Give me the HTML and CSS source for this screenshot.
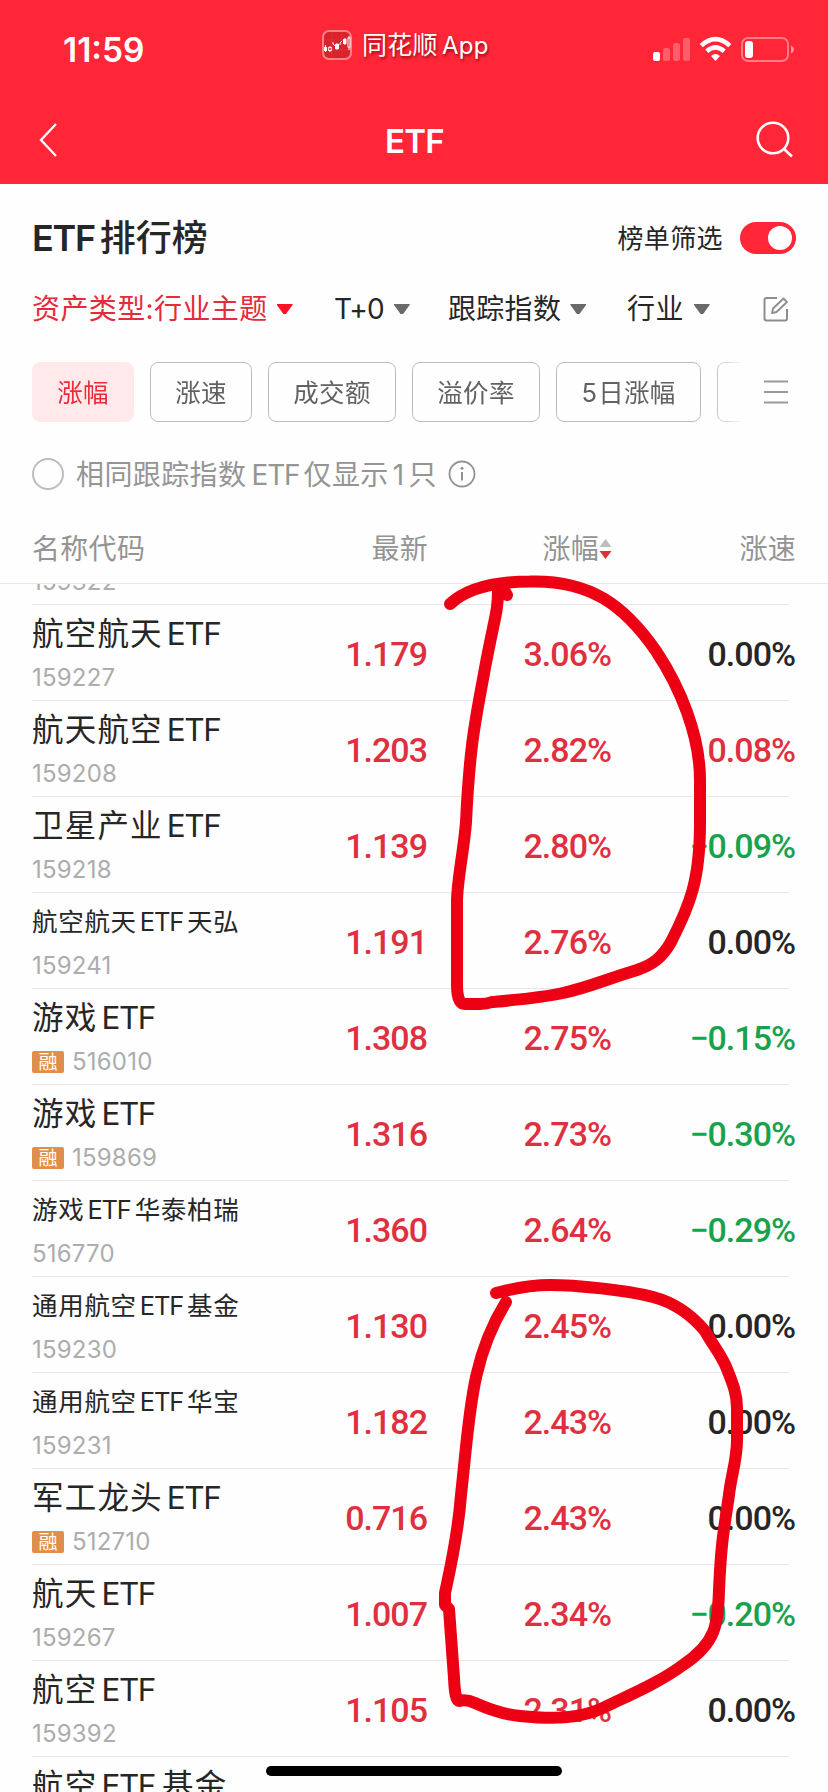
FILE: index.html
```html
<!DOCTYPE html>
<html lang="zh-CN">
<head>
<meta charset="utf-8">
<title>ETF</title>
<link rel="stylesheet" href="styles.css">
</head>
<body>
<div class="screen">
  <header class="top">
    <div class="status">
      <div class="time">11:59</div>
      <div class="app">
        <svg class="app-icon" width="30" height="30" viewBox="0 0 30 30"><rect x="1" y="1" width="28" height="28" rx="6" fill="#d9232b" stroke="#ff8087" stroke-width="2"/><path d="M2 10H28M2 20H28M10 2V28M20 2V28" stroke="#e23a40" stroke-width=".6"/><g fill="#fff"><rect x="2" y="17" width="3" height="4"/><rect x="13" y="14" width="4" height="5"/><rect x="21" y="9" width="3.500" height="5"/></g><path d="M3.500 15V22M8 16V22M11 12V14L13 16M15 13V20M18 15V13L20 11M23 8V15M27 6V8M27 17V20" stroke="#fff" stroke-width="1" fill="none"/><rect x="6.700" y="17.500" width="2.600" height="3" fill="#d9232b" stroke="#fff"/><rect x="26" y="8" width="2" height="9" fill="none" stroke="#fff"/></svg>
        <span class="app-name">同花顺<span class="app-latin">App</span></span>
      </div>
      <svg class="system" width="142" height="28" viewBox="0 0 142 28"><g fill="#fff"><rect x="1" y="16" width="7" height="9" rx="2"/><g opacity=".25"><rect x="11" y="12" width="7" height="13" rx="2"/><rect x="21" y="7" width="7" height="18" rx="2"/><rect x="31" y="2" width="7" height="23" rx="2"/></g></g><g fill="none" stroke="#fff" stroke-width="4.600"><path d="M49.200 9.600Q63.500-3.400 77.800 9.600"/><path d="M54.800 15.300Q63.500 7.600 72.200 15.300"/></g><path d="M59 20Q63.500 16.200 68 20L63.500 25Z" fill="#fff"/><rect x="90" y="2" width="46" height="23" rx="6" fill="none" stroke="#fff" stroke-opacity=".4" stroke-width="2"/><rect x="93" y="5" width="8" height="17" rx="3" fill="#fff"/><path d="M139 9.500Q142 11 142 13.500T139 17.500Z" fill="#fff" opacity=".5"/></svg>
    </div>
    <nav class="nav">
      <svg width="20" height="36" viewBox="0 0 20 36"><path d="M17 2L2 18L17 34" fill="none" stroke="#fff" stroke-width="2.300"/></svg>
      <h1 class="title">ETF</h1>
      <svg width="38" height="38" viewBox="0 0 38 38"><circle cx="17" cy="17" r="15.300" fill="none" stroke="#fff" stroke-width="2.600"/><path d="M28 28L36 35.500" stroke="#fff" stroke-width="2.600"/></svg>
    </nav>
  </header>

  <section class="heading">
    <h2 class="h-title"><span class="h-latin">ETF</span>排行榜</h2>
    <div class="switch-box"><span class="switch-label">榜单筛选</span><span class="switch"><i class="knob"></i></span></div>
  </section>

  <section class="filters">
    <span class="filter f1 active">资产类型:行业主题<i class="caret"></i></span>
    <span class="filter f2"><span class="latin t0">T+0</span><i class="caret"></i></span>
    <span class="filter f3">跟踪指数<i class="caret"></i></span>
    <span class="filter f4">行业<i class="caret"></i></span>
    <svg class="edit" width="26" height="26" viewBox="0 0 26 26"><path d="M14 2H3.500Q1.500 2 1.500 4V22.500Q1.500 24.500 3.500 24.500H22Q24 24.500 24 22.500V13" fill="none" stroke="#8d8d8d" stroke-width="2"/><path d="M9 17L10 12.500L20.500 2.500L24 6L13.500 16Z" fill="none" stroke="#8d8d8d" stroke-width="1.800" stroke-linejoin="round"/></svg>
  </section>

  <section class="chips">
    <div class="chip-list">
      <span class="chip chip-on w2">涨幅</span><span class="chip w2">涨速</span><span class="chip w3">成交额</span><span class="chip w3">溢价率</span><span class="chip w4"><span class="latin">5</span>日涨幅</span><span class="chip w5"><span class="latin">20</span>日涨幅</span>
    </div>
    <svg class="menu" width="26" height="26" viewBox="0 0 26 26"><path d="M1 2.500H25M1 13H25M1 23.500H25" stroke="#9a9a9a" stroke-width="2"/></svg>
  </section>

  <section class="same">
    <i class="radio"></i>
    <span class="same-text">相同跟踪指数<span class="same-latin">ETF</span>仅显示<span class="one">1</span>只</span>
    <svg width="28" height="28" viewBox="0 0 28 28"><circle cx="14" cy="14" r="12.500" fill="none" stroke="#929292" stroke-width="1.800"/><circle cx="14" cy="8.300" r="1.500" fill="#929292"/><path d="M14 12V20.500" stroke="#929292" stroke-width="2"/></svg>
  </section>

  <section class="columns">
    <span>名称代码</span><span class="num">最新</span><span class="num sorted">涨幅<svg width="13" height="22" viewBox="0 0 13 22"><path d="M6.500 1L12.500 9H.5Z" fill="#bdbdbd"/><path d="M6.500 21L12.500 13H.5Z" fill="#dc3035"/></svg></span><span class="num">涨速</span>
  </section>

  <main class="list">
    <div class="row row-first"><div class="id"><div class="code">159322</div></div></div>
    <div class="row"><div class="id"><div class="name">航空航天<b>ETF</b></div><div class="code">159227</div></div><div class="val up">1.179</div><div class="val up">3.06%</div><div class="val">0.00%</div></div>
    <div class="row"><div class="id"><div class="name">航天航空<b>ETF</b></div><div class="code">159208</div></div><div class="val up">1.203</div><div class="val up">2.82%</div><div class="val up">0.08%</div></div>
    <div class="row"><div class="id"><div class="name">卫星产业<b>ETF</b></div><div class="code">159218</div></div><div class="val up">1.139</div><div class="val up">2.80%</div><div class="val down">−0.09%</div></div>
    <div class="row"><div class="id"><div class="name small">航空航天<b>ETF</b>天弘</div><div class="code">159241</div></div><div class="val up">1.191</div><div class="val up">2.76%</div><div class="val">0.00%</div></div>
    <div class="row"><div class="id"><div class="name">游戏<b>ETF</b></div><div class="code"><span class="tag">融</span>516010</div></div><div class="val up">1.308</div><div class="val up">2.75%</div><div class="val down">−0.15%</div></div>
    <div class="row"><div class="id"><div class="name">游戏<b>ETF</b></div><div class="code"><span class="tag">融</span>159869</div></div><div class="val up">1.316</div><div class="val up">2.73%</div><div class="val down">−0.30%</div></div>
    <div class="row"><div class="id"><div class="name small">游戏<b>ETF</b>华泰柏瑞</div><div class="code">516770</div></div><div class="val up">1.360</div><div class="val up">2.64%</div><div class="val down">−0.29%</div></div>
    <div class="row"><div class="id"><div class="name small">通用航空<b>ETF</b>基金</div><div class="code">159230</div></div><div class="val up">1.130</div><div class="val up">2.45%</div><div class="val">0.00%</div></div>
    <div class="row"><div class="id"><div class="name small">通用航空<b>ETF</b>华宝</div><div class="code">159231</div></div><div class="val up">1.182</div><div class="val up">2.43%</div><div class="val">0.00%</div></div>
    <div class="row"><div class="id"><div class="name">军工龙头<b>ETF</b></div><div class="code"><span class="tag">融</span>512710</div></div><div class="val up">0.716</div><div class="val up">2.43%</div><div class="val">0.00%</div></div>
    <div class="row"><div class="id"><div class="name">航天<b>ETF</b></div><div class="code">159267</div></div><div class="val up">1.007</div><div class="val up">2.34%</div><div class="val down">−0.20%</div></div>
    <div class="row"><div class="id"><div class="name">航空<b>ETF</b></div><div class="code">159392</div></div><div class="val up">1.105</div><div class="val up">2.31%</div><div class="val">0.00%</div></div>
    <div class="row"><div class="id"><div class="name">航空<b>ETF</b>基金</div></div></div>
  </main>

  <svg class="ink" width="828" height="1792" viewBox="0 0 828 1792">
    <path d="M450 604C463 592 488 581.500 530 581.500C590 580 624 605 656 651C680 687 700 735 700 780V823C700 880 690 905 671 942C662 958 652 965 637 970C607 979 590 987 563 993C540 998 515 1000 492 1002Q487 1004 480 1004H465Q457 1004 457 985V902C457 880 464 850 466 822C470 740 476 718 485 668C495 615 498 612 498 590L504 590L507 595"/>
    <path d="M496 1293C515 1288 530 1285 550 1285C575 1285 627 1290 653 1297C672 1302 690 1313 705 1331C714 1347 722 1356 727 1369C733 1384 737 1394 737 1408V1440C737 1460 731 1476 729 1495C723 1535 721 1545 719 1590C718 1625 716 1643 683 1665C660 1682 632 1694 607 1706C580 1720 550 1719 520 1716C500 1714 486 1708 475 1703Q466 1699 459 1701Q455 1701 454 1678L449 1609L445 1605V1593C450 1570 458 1535 461 1495C470 1415 470 1360 506 1302"/>
  </svg>
  <div class="home"></div>
</div>
</body>
</html>
```

FILE: styles.css
```css
* { box-sizing: border-box; }
body { margin: 0; background: #fff; }
.screen {
  position: relative;
  width: 828px;
  height: 1792px;
  overflow: hidden;
  display: flex;
  flex-direction: column;
  background: #fefefe;
  color: #262626;
  font-family: Inter, "Noto Sans CJK SC", sans-serif;
  white-space: nowrap;
}
svg { display: block; flex: none; }
h1, h2 { margin: 0; }

.top { height: 184px; background: #ff2638; color: #fff; flex: none; }
.status { height: 96px; display: grid; grid-template-columns: 322px 329px 1fr; }
.time { padding: 30px 0 0 63px; font-size: 33.5px; line-height: 40px; font-weight: 600; }
.app { display: flex; align-items: flex-start; padding-top: 30px; gap: 10px; }
.app-name { margin-top: -3px; font-family: "Noto Sans CJK SC", sans-serif; font-size: 25px; line-height: 32px; letter-spacing: .3px; text-shadow: 1px 2px 3px rgba(90, 0, 0, .7); }
.app-latin { font-family: Inter, sans-serif; margin-left: 4px; font-size: 24px; }
.system { margin: 36px 0 0 1px; }
.nav { height: 88px; display: flex; justify-content: space-between; align-items: center; padding: 0 34px 0 39px; }
.title { font-size: 33px; font-weight: 600; line-height: 40px; padding: 2px 0 0 14px; letter-spacing: -.7px; }

.heading { height: 108px; flex: none; display: flex; justify-content: space-between; align-items: center; padding: 0 32px; }
.h-title { margin-top: -3px; font-family: "Noto Sans CJK SC", sans-serif; font-size: 36px; line-height: 48px; font-weight: 500; }
.h-latin { font-family: Inter, sans-serif; font-weight: 600; letter-spacing: -1.3px; margin-right: 5px; }
.switch-box { display: flex; align-items: center; gap: 17px; font-size: 26px; line-height: 32px; }
.switch-label { padding-top: 2px; letter-spacing: .4px; }
.switch { width: 56px; height: 32px; border-radius: 16px; background: #ff2638; padding: 4px; display: flex; justify-content: flex-end; }
.knob { width: 24px; height: 24px; border-radius: 50%; background: #fff; }

.filters { height: 34px; flex: none; display: flex; align-items: center; padding: 0 38px 0 32px; }
.filter { display: flex; align-items: center; gap: 9px; font-size: 28px; line-height: 34px; letter-spacing: .4px; }
.f1 { width: 302px; }
.f2 { width: 114px; }
.f3 { width: 179px; letter-spacing: .3px; }
.f3, .f4 { gap: 10px; }
.f3 .caret { margin-left: -1px; }
.f4 { width: 136px; }
.caret { width: 16px; height: 11px; background: #696969; clip-path: polygon(3% 0, 97% 0, 100% 12%, 58% 96%, 42% 96%, 0 12%); }
.active { color: #e42b3b; }
.active .caret { background: #ff1027; }
.latin { font-family: Inter, sans-serif; margin-right: 1px; }
.t0 { letter-spacing: -.8px; }

.chips { height: 60px; margin-top: 36px; flex: none; display: flex; align-items: center; gap: 16px; padding-left: 32px; }
.chip-list { width: 715px; display: flex; gap: 16px; overflow: hidden; -webkit-mask-image: linear-gradient(90deg, #000 680px, transparent 713px); mask-image: linear-gradient(90deg, #000 680px, transparent 713px); }
.chip { height: 60px; flex: none; border: 1px solid #bcbcbc; border-radius: 8px; text-align: center; font-size: 25.5px; line-height: 59px; color: #626262; letter-spacing: .3px; }
.w2 { width: 102px; }
.w3 { width: 128px; }
.w4 { width: 145px; }
.w5 { width: 169px; }
.chip-on { background: #ffe9ea; border-color: #ffe9ea; color: #ee2b3b; }

.same { height: 104px; flex: none; display: flex; align-items: center; padding-left: 32px; color: #959595; }
.radio { width: 32px; height: 32px; border: 2px solid #bcbcbc; border-radius: 50%; }
.same-text { font-size: 28px; line-height: 36px; letter-spacing: .4px; padding-top: 1px; margin: 0 11px 0 12px; }
.same-latin { margin: 0 4px 0 5px; letter-spacing: -1.1px; }
.one { margin: 0 4px 0 4px; }

.columns { height: 58px; flex: none; border-bottom: 1px solid #e8e8e8; padding: 1px 0 0 32px; display: grid; grid-template-columns: 220px 176px 184px 184px; font-size: 28px; line-height: 44px; color: #949494; letter-spacing: .3px; }
.num { text-align: right; }
.sorted { display: flex; justify-content: flex-end; align-items: center; height: 44px; }

.list { height: 1208px; overflow: hidden; flex: none; }
.row { height: 96px; width: 757px; margin-left: 32px; border-bottom: 1px solid #e7e7e7; display: grid; grid-template-columns: 220px 175px 184px 184px; }
.row-first { height: 21px; }
.row-first .code { margin-top: -17px; }
.name { font-size: 31.5px; line-height: 40px; height: 40px; margin-top: 9px; letter-spacing: 1.2px; }
.name b { font-weight: 400; margin: 0 7px 0 4px; letter-spacing: -1.4px; }
.small { font-size: 25.5px; letter-spacing: .7px; }
.small b { margin: 0 4px 0 3px; letter-spacing: -1.2px; }
.code { font-size: 24px; line-height: 30px; height: 30px; margin-top: 9px; color: #adadad; display: flex; align-items: center; letter-spacing: .2px; }
.tag { width: 32px; height: 22px; margin-right: 8px; border-radius: 2px; background: #df8f4c; color: #fff; font-size: 19px; line-height: 23px; text-align: center; }
.val { font-family: Roboto, sans-serif; font-weight: 500; font-size: 34px; line-height: 99px; height: 95px; text-align: right; letter-spacing: -1px; }
.up { color: #e0303f; }
.down { color: #17a34e; }

.ink { position: absolute; left: 0; top: 0; fill: none; stroke: #ed0013; stroke-width: 12; stroke-linecap: round; stroke-linejoin: round; }
.home { position: absolute; left: 266px; top: 1766px; width: 296px; height: 10px; border-radius: 5px; background: #000; }
```
